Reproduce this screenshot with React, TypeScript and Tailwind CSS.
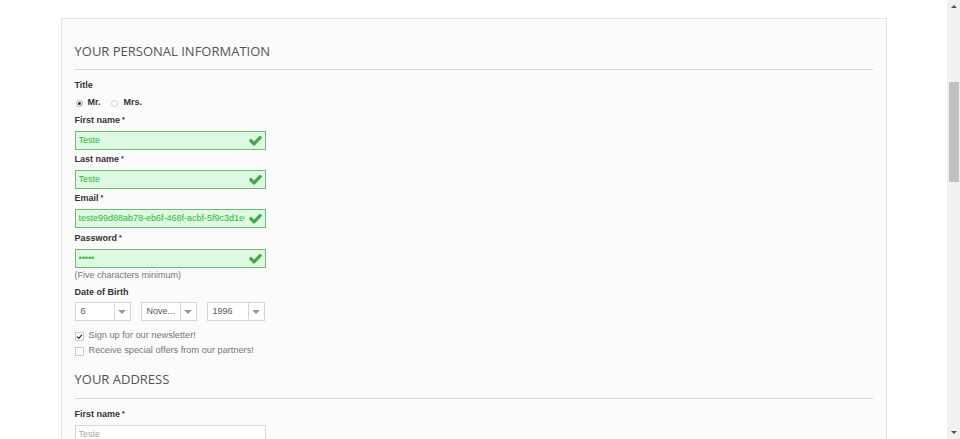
const CHECK =
  "M1671 566q0 40-28 68l-724 724-136 136q-28 28-68 28t-68-28l-136-136-362-362q-28-28-28-68t28-68l136-136q28-28 68-28t68 28l294 295 656-657q28-28 68-28t68 28l136 136q28 28 28 68z";

function Check({ className = "" }: { className?: string }) {
  return (
    <svg viewBox="121 380 1550 1150" className={className} fill="currentColor">
      <path d={CHECK} />
    </svg>
  );
}

function Label({ text, required = false, className = "" }: { text: string; required?: boolean; className?: string }) {
  return (
    <div className={`h-[12px] leading-[12px] text-[9px] font-bold text-[#333] ${className}`}>
      {text}
      {required && <sup className="ml-[2px] text-[7px] font-bold relative -top-[1px]">*</sup>}
    </div>
  );
}

function ValidInput({ value, className = "" }: { value: string; className?: string }) {
  return (
    <div
      className={`w-[191px] h-[19px] flex items-center bg-[#ddf9e1] border border-[#6fbd75] pl-[3px] pr-[3px] ${className}`}
    >
      <span className="flex-1 min-w-0 overflow-hidden whitespace-nowrap text-[9px] text-[#35b33f] leading-[17px]">
        {value}
      </span>
      <Check className="w-[13px] h-[10px] ml-[4px] text-[#46a74e] shrink-0" />
    </div>
  );
}

function Select({ value, width }: { value: string; width: string }) {
  return (
    <div className={`${width} h-[19px] flex bg-white border border-[#d6d4d4]`}>
      <span className="flex-1 pl-[5px] text-[9px] leading-[17px] text-[#555]">{value}</span>
      <span className="w-[16px] border-l border-[#d6d4d4] flex items-center justify-center">
        <svg viewBox="0 0 8 4" className="w-[8px] h-[4px]" fill="#999">
          <path d="M0 0h8L4 4z" />
        </svg>
      </span>
    </div>
  );
}

function Heading({ text, className = "" }: { text: string; className?: string }) {
  return (
    <div
      className={`font-['Open_Sans',sans-serif] text-[13px] leading-[18px] text-[#555454] uppercase border-b border-[#d6d4d4] ${className}`}
    >
      {text}
    </div>
  );
}

function Checkbox({ checked, text, className = "" }: { checked?: boolean; text: string; className?: string }) {
  return (
    <div className={`h-[12px] flex items-center ${className}`}>
      <span className="w-[9px] h-[9px] border border-[#ccc] bg-white flex items-center justify-center">
        {checked && (
          <svg viewBox="0 0 10 10" className="w-[9px] h-[9px]">
            <path d="M1.5 5.2 L4 7.6 L8.6 2.4" fill="none" stroke="#333" strokeWidth="1.8" />
          </svg>
        )}
      </span>
      <span className="ml-[5px] text-[9.2px] text-[#777]">{text}</span>
    </div>
  );
}

export default function App() {
  return (
    <div className="w-full h-[439px] overflow-hidden flex bg-white font-['Liberation_Sans',Arial,sans-serif]">
      <div className="flex-1 pt-[18px]">
        <div className="mx-auto w-[826px] h-[480px] bg-[#fbfbfb] border border-[#e5e5e5] px-[13px] pt-[23px]">
          <Heading text="Your personal information" className="pb-[9px]" />

          <Label text="Title" className="mt-[9px]" />
          <div className="mt-[6px] h-[12px] flex items-center text-[9px] font-bold text-[#333]">
            <span className="w-[7px] h-[7px] ml-[1px] rounded-full border border-[#aaa] bg-white flex items-center justify-center">
              <span className="w-[3px] h-[3px] rounded-full bg-[#222]" />
            </span>
            <span className="ml-[5px]">Mr.</span>
            <span className="w-[7px] h-[7px] ml-[10px] rounded-full border border-[#ccc] bg-white" />
            <span className="ml-[6px]">Mrs.</span>
          </div>

          <Label text="First name" required className="mt-[5px]" />
          <ValidInput value="Teste" className="mt-[5px]" />
          <Label text="Last name" required className="mt-[3px]" />
          <ValidInput value="Teste" className="mt-[5px]" />
          <Label text="Email" required className="mt-[3px]" />
          <ValidInput value="teste99d88ab78-eb6f-468f-acbf-5f9c3d1e0b2c@teste.com" className="mt-[5px]" />
          <Label text="Password" required className="mt-[4px]" />
          <ValidInput value="•••••" className="mt-[5px]" />
          <div className="mt-[1px] h-[12px] leading-[12px] text-[9px] text-[#777]">(Five characters minimum)</div>

          <Label text="Date of Birth" className="mt-[5px]" />
          <div className="mt-[4px] flex gap-[10px]">
            <Select value="6" width="w-[56px]" />
            <Select value="Nove..." width="w-[56px]" />
            <Select value="1996" width="w-[58px]" />
          </div>

          <Checkbox checked text="Sign up for our newsletter!" className="mt-[9px]" />
          <Checkbox text="Receive special offers from our partners!" className="mt-[3px]" />

          <Heading text="Your address" className="mt-[13px] pb-[10px]" />
          <Label text="First name" required className="mt-[9px]" />
          <div className="mt-[5px] w-[191px] h-[19px] bg-white border border-[#d6d4d4] pl-[3px] text-[9px] leading-[17px] text-[#aaa]">
            Teste
          </div>
        </div>
      </div>

      {/* scrollbar */}
      <div className="w-[13px] h-full bg-[#f1f1f1] flex flex-col items-center">
        <svg viewBox="0 0 6 3" className="w-[6px] h-[3px] mt-[5px]" fill="#505050">
          <path d="M0 3h6L3 0z" />
        </svg>
        <div className="mt-[74px] w-[10px] h-[100px] bg-[#c1c1c1]" />
        <div className="flex-1" />
        <svg viewBox="0 0 6 3" className="w-[6px] h-[3px] mb-[5px]" fill="#505050">
          <path d="M0 0h6L3 3z" />
        </svg>
      </div>
    </div>
  );
}
